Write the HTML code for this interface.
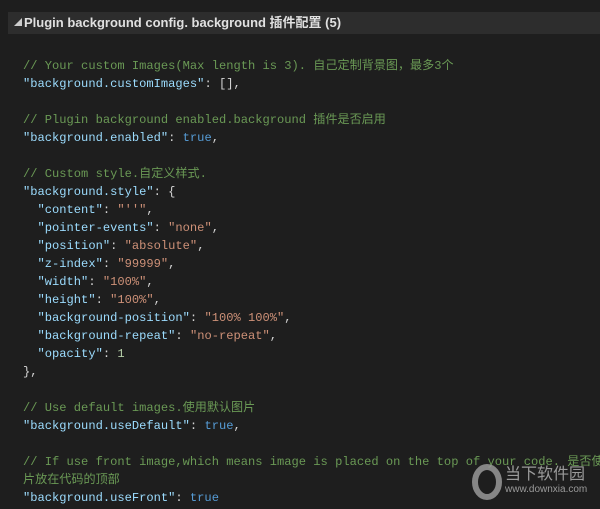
<!DOCTYPE html><html><head><meta charset="utf-8"><style>
body{margin:0;width:600px;height:509px;background:#1e1e1e;overflow:hidden;position:relative}
.hdr{position:absolute;left:8px;top:12px;width:592px;height:22px;background:#2d2d2d;color:#e0e0e0;font:bold 13px "Liberation Sans","Noto Sans CJK SC",sans-serif;line-height:22px;overflow:hidden}
.hdr span.t{position:absolute;left:6px;top:0;font-size:8px;color:#ccc}
.hdr span.x{position:absolute;left:16px}
pre{position:absolute;left:23px;top:57px;width:577px;overflow:hidden;margin:0;font:12.1px/18px "Liberation Mono","Noto Sans CJK SC",monospace;color:#d4d4d4}
.c{color:#6a9955}.k{color:#9cdcfe}.s{color:#ce9178}.b{color:#569cd6}.n{color:#b5cea8}
.wm{position:absolute;color:#9a9a9a;font-family:"Liberation Sans","Noto Sans CJK SC",sans-serif;white-space:nowrap}
</style></head><body>
<div class="hdr"><span class="t">◢</span><span class="x">Plugin background config. background 插件配置 (5)</span></div>
<pre><span class="c">// Your custom Images(Max length is 3). 自己定制背景图，最多3个</span>
<span class="k">"background.customImages"</span>: [],

<span class="c">// Plugin background enabled.background 插件是否启用</span>
<span class="k">"background.enabled"</span>: <span class="b">true</span>,

<span class="c">// Custom style.自定义样式.</span>
<span class="k">"background.style"</span>: {
  <span class="k">"content"</span>: <span class="s">"''"</span>,
  <span class="k">"pointer-events"</span>: <span class="s">"none"</span>,
  <span class="k">"position"</span>: <span class="s">"absolute"</span>,
  <span class="k">"z-index"</span>: <span class="s">"99999"</span>,
  <span class="k">"width"</span>: <span class="s">"100%"</span>,
  <span class="k">"height"</span>: <span class="s">"100%"</span>,
  <span class="k">"background-position"</span>: <span class="s">"100% 100%"</span>,
  <span class="k">"background-repeat"</span>: <span class="s">"no-repeat"</span>,
  <span class="k">"opacity"</span>: <span class="n">1</span>
},

<span class="c">// Use default images.使用默认图片</span>
<span class="k">"background.useDefault"</span>: <span class="b">true</span>,

<span class="c">// If use front image,which means image is placed on the top of your code. 是否使用前景图</span>
<span class="c">片放在代码的顶部</span>
<span class="k">"background.useFront"</span>: <span class="b">true</span></pre>
<svg style="position:absolute;left:470px;top:462px" width="34" height="40"><ellipse cx="17" cy="20" rx="12" ry="15" fill="none" stroke="#a0a0a0" stroke-width="6" opacity="0.8"/></svg>
<div class="wm" style="left:505px;top:460px;font-size:16px">当下软件园</div>
<div class="wm" style="left:505px;top:484px;font-size:10px">www.downxia.com</div>
</body></html>
